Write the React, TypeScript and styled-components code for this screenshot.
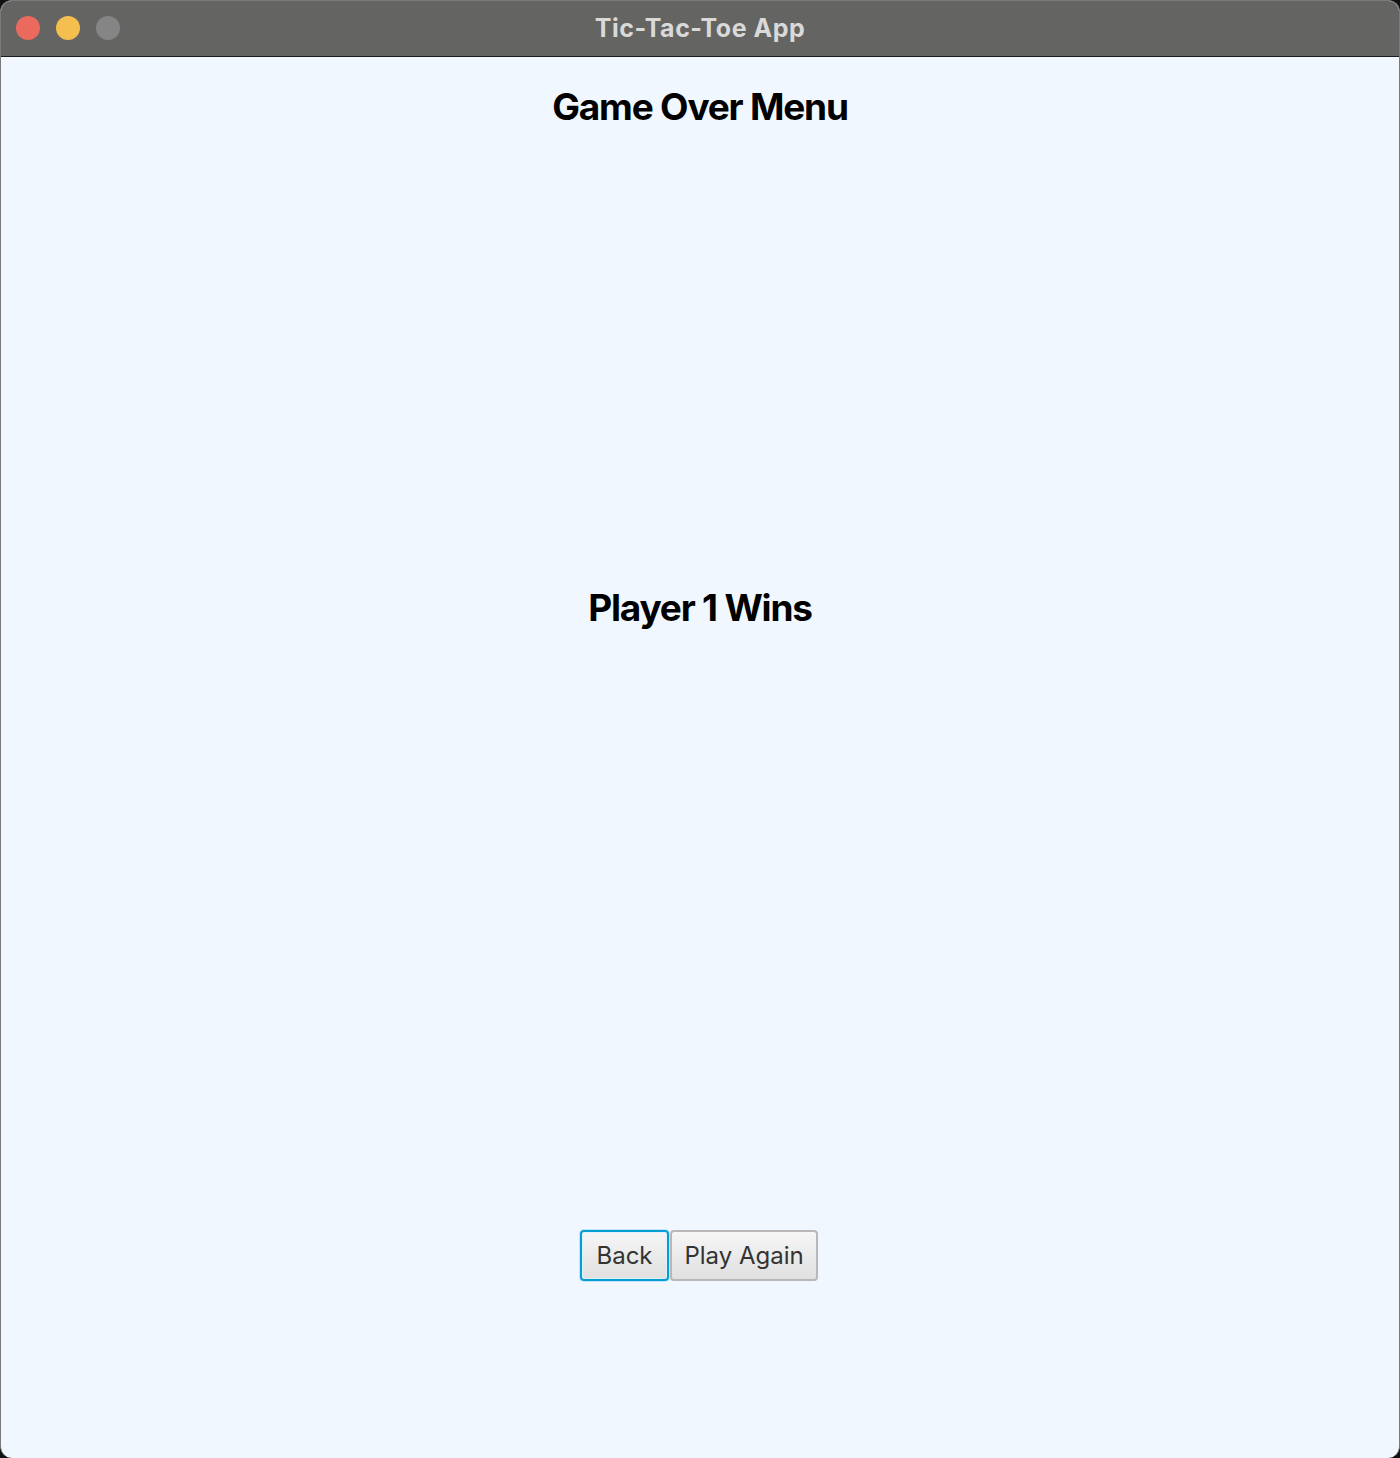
import React from "react";
import styled, { createGlobalStyle } from "styled-components";

const Global = createGlobalStyle`
  html, body { margin: 0; padding: 0; background: #111; }
  body { width: 1400px; height: 1458px; overflow: hidden; font-family: Inter, "Noto Sans", sans-serif; }
`;

const Window = styled.div`
  width: 1400px;
  height: 1458px;
  box-sizing: border-box;
  border-radius: 12px;
  overflow: hidden;
  display: flex;
  flex-direction: column;
  background: #f0f7ff;
  border: 1px solid #7a7a7a;
  border-bottom: none;
`;

const TitleBar = styled.div`
  position: relative;
  height: 55px;
  flex: none;
  background: #646462;
  border-bottom: 1px solid #1c1c1c;
  display: flex;
  align-items: center;
  justify-content: center;
`;

const Lights = styled.div`
  position: absolute;
  left: 15px;
  top: 15px;
  display: flex;
  gap: 16px;
`;

const Light = styled.span<{ $c: string }>`
  width: 24px;
  height: 24px;
  border-radius: 50%;
  background: ${(p) => p.$c};
`;

const Title = styled.div`
  color: #d9d9d9;
  font-family: Inter, "Noto Sans", sans-serif;
  font-weight: 700;
  font-size: 25px;
  letter-spacing: 0.5px;
  margin-top: -2px;
`;

const Content = styled.div`
  flex: 1;
  display: flex;
  flex-direction: column;
`;

const Header = styled.div`
  height: 98px;
  display: flex;
  align-items: center;
  justify-content: center;
`;

const Heading = styled.h1`
  margin: 0;
  font-family: Inter, "Noto Sans", sans-serif;
  font-weight: 700;
  font-size: 37px;
  letter-spacing: -1.2px;
  color: #000;
`;

const Middle = styled.div`
  flex: 1;
  display: flex;
  align-items: center;
  justify-content: center;
`;

const Footer = styled.div`
  height: 399px;
  box-sizing: border-box;
  padding-top: 171px;
  display: flex;
  justify-content: center;
  align-items: flex-start;
  gap: 1px;
  padding-right: 2px;
`;

const Button = styled.button<{ $focused?: boolean; $w: number }>`
  width: ${(p) => p.$w}px;
  height: 51px;
  box-sizing: border-box;
  padding: 0;
  white-space: nowrap;
  font-family: Inter, "Noto Sans", sans-serif;
  font-size: 24px;
  color: #333;
  border-radius: 4px;
  background: linear-gradient(#f6f6f6, #e0e0e0);
  border: ${(p) => (p.$focused ? "2px solid #039ed3" : "2px solid #b8b8b8")};
  box-shadow: ${(p) =>
    p.$focused ? "inset 0 0 0 1px #dff1fb, 0 0 0 1px #c4e6f4" : "none"};
  cursor: pointer;
`;

export default function App() {
  return (
    <>
      <Global />
      <Window>
        <TitleBar>
          <Lights>
            <Light $c="#ec695e" />
            <Light $c="#f4bf4f" />
            <Light $c="#858585" />
          </Lights>
          <Title>Tic-Tac-Toe App</Title>
        </TitleBar>
        <Content>
          <Header>
            <Heading>Game Over Menu</Heading>
          </Header>
          <Middle>
            <Heading>Player 1 Wins</Heading>
          </Middle>
          <Footer>
            <Button $focused $w={89}>Back</Button>
            <Button $w={148}>Play Again</Button>
          </Footer>
        </Content>
      </Window>
    </>
  );
}
